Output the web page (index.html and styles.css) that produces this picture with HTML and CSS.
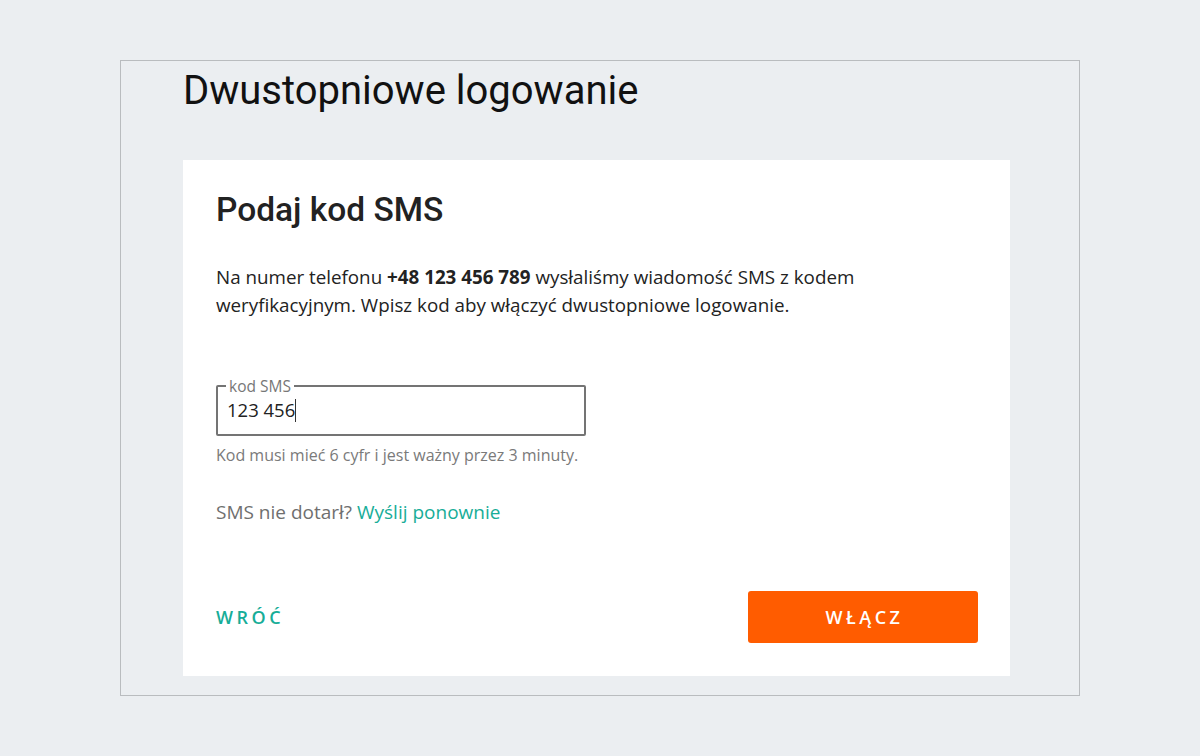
FILE: index.html
```html
<!DOCTYPE html>
<html lang="pl">
  <head>
    <meta charset="utf-8">
    <link rel="stylesheet" href="styles.css">
  </head>
  <body>
    <div class="frame">
      <h1 class="page-title">Dwustopniowe logowanie</h1>

      <div class="card">
        <h2 class="card-title">Podaj kod SMS</h2>

        <p class="lead">
          Na numer telefonu <strong>+48 123 456 789</strong> wysłaliśmy wiadomość SMS z kodem
          weryfikacyjnym. Wpisz kod aby włączyć dwustopniowe logowanie.
        </p>

        <fieldset class="field">
          <legend>kod SMS</legend>
          <span class="value">123 456</span><span class="caret"></span>
        </fieldset>
        <p class="hint">Kod musi mieć 6 cyfr i jest ważny przez 3 minuty.</p>

        <p class="resend">SMS nie dotarł? <a href="#">Wyślij ponownie</a></p>

        <div class="actions">
          <a href="#" class="back">Wróć</a>
          <button class="submit">Włącz</button>
        </div>
      </div>
    </div>
  </body>
</html>
```

FILE: styles.css
```css
body {
  margin: 0;
  background: #ebeef1;
  font-family: "Open Sans", "Liberation Sans", sans-serif;
  color: #222;
}

.frame {
  box-sizing: border-box;
  width: 960px;
  height: 636px;
  margin: 60px 0 0 120px;
  border: 1px solid #b9bcbf;
  padding: 0 69px 0 62px;
}

.page-title {
  box-sizing: border-box;
  margin: 0;
  padding-top: 6px;
  height: 99px;
  font-family: Roboto, sans-serif;
  font-weight: 400;
  font-size: 40px;
  line-height: 48px;
  color: #111;
}

.card {
  background: #fff;
  height: 516px;
  box-sizing: border-box;
  padding: 30px 32px 0 33px;
}

.card-title {
  margin: 0;
  font-family: Roboto, sans-serif;
  font-weight: 500;
  font-size: 33.5px;
  line-height: 40px;
  color: #222;
}

.lead {
  margin: 33px 0 0;
  max-width: 680px;
  font-size: 18.8px;
  line-height: 28px;
  color: #222;
}

.lead strong {
  font-weight: 700;
}

.field {
  margin: 59px 0 0;
  width: 370px;
  box-sizing: border-box;
  border: 2px solid #747474;
  border-radius: 2px;
  padding: 3px 10px 11px 9px;
  display: flex;
  align-items: center;
  height: 26px;
  min-height: 58px;
}

.field legend {
  padding: 0 3px;
  margin-left: -1px;
  font-size: 15.5px;
  line-height: 16px;
  color: #777;
}

.value {
  font-size: 18.5px;
  line-height: 26px;
  color: #222;
}

.caret {
  display: inline-block;
  width: 1px;
  height: 23px;
  background: #333;
}

.hint {
  margin: 9px 0 0;
  font-size: 16px;
  line-height: 20px;
  color: #7a7a7a;
}

.resend {
  margin: 35px 0 0;
  font-size: 19px;
  line-height: 24px;
  color: #6f6f6f;
}

.resend a {
  color: #17ad98;
  text-decoration: none;
}

.actions {
  margin-top: 67px;
  display: flex;
  justify-content: space-between;
  align-items: center;
}

.back {
  font-size: 18px;
  font-weight: 600;
  letter-spacing: 3.5px;
  text-transform: uppercase;
  text-decoration: none;
  color: #17ad98;
}

.submit {
  width: 230px;
  height: 52px;
  border: 0;
  border-radius: 3px;
  padding: 0 0 0 3px;
  background: #ff5c00;
  color: #fff;
  font-family: "Open Sans", "Liberation Sans", sans-serif;
  font-size: 18px;
  font-weight: 600;
  letter-spacing: 3.5px;
  text-transform: uppercase;
}
```
